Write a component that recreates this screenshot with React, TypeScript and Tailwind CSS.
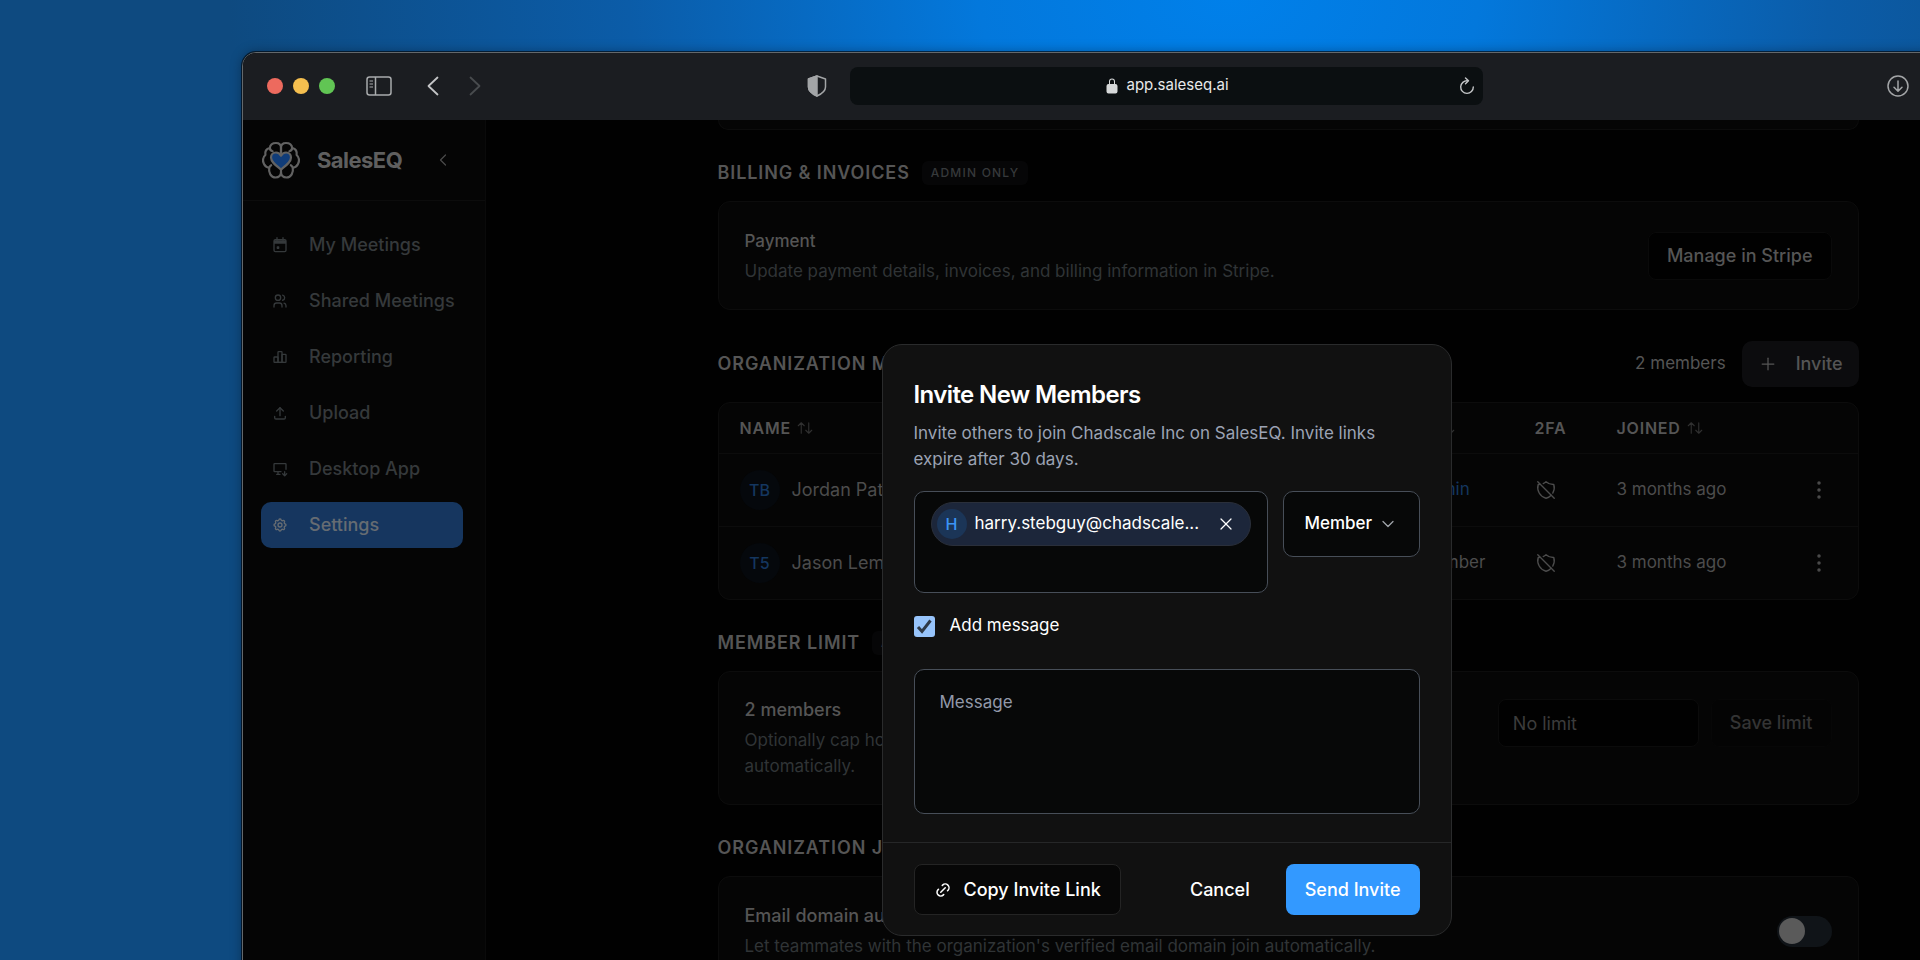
import * as React from "react";
import {
    TbArrowsSort,
    TbChartBar,
    TbChevronDown,
    TbChevronLeft,
    TbDeviceDesktopDown,
    TbDotsVertical,
    TbLink,
    TbPlus,
    TbSettings,
    TbShieldOff,
    TbUpload,
    TbUsers,
    TbX,
} from "react-icons/tb";
import { IoLockClosed } from "react-icons/io5";

function CalendarIcon({ className }: { className?: string }) {
    return (
        <svg viewBox="0 0 24 24" className={className} fill="none" stroke="currentColor" strokeWidth="2" strokeLinejoin="round" aria-hidden="true">
            <rect x="3" y="4" width="18" height="18" rx="2" />
            <path d="M3 5h18v5H3z" fill="currentColor" stroke="none" />
            <path d="M7.5 1v4M16.5 1v4" strokeLinecap="round" />
            <rect x="7" y="14" width="4" height="4" rx="1" fill="currentColor" stroke="none" />
        </svg>
    );
}

function Logo() {
    return (
        <svg viewBox="0 0 40 38" className="h-[38px] w-10 shrink-0" fill="none" stroke="#626262" strokeWidth="2.2" strokeLinecap="round" strokeLinejoin="round" aria-hidden="true">
            <path d="M20 12V6.5C20 3.5 17.8 2 15 2 11.5 2 9.2 4 8.8 7 5.5 7.8 3.8 10.5 4.4 14 1.8 16 1.3 20 3 23 4 25 6 26.4 8.2 26.8 7.4 31.5 9.8 36.5 14.5 36.5 18 36.5 20 34 20 31V27" />
            <path d="M20 12V6.5C20 3.5 22.2 2 25 2 28.5 2 30.8 4 31.2 7 34.5 7.8 36.2 10.5 35.6 14 38.2 16 38.7 20 37 23 36 25 34 26.4 31.8 26.8 32.6 31.5 30.2 36.5 25.5 36.5 22 36.5 20 34 20 31" />
            <path d="M8.8 7c.2 1.7 1.2 2.8 2.8 3.2M31.2 7c-.2 1.7-1.2 2.8-2.8 3.2M8.2 26.8c.3-1.2 1-2 2-2.6M31.8 26.8c-.3-1.2-1-2-2-2.6" />
            <path d="M20 28.500C15 24.500 10 21 10 16.500 10 13.500 12.300 11.500 15 11.500 17.200 11.500 19 12.700 20 14.700 21 12.700 22.800 11.500 25 11.500 27.700 11.500 30 13.500 30 16.500 30 21 25 24.500 20 28.500Z" fill="#103c78" />
        </svg>
    );
}

const navItems = [
    { label: "My Meetings", icon: CalendarIcon },
    { label: "Shared Meetings", icon: TbUsers },
    { label: "Reporting", icon: TbChartBar },
    { label: "Upload", icon: TbUpload },
    { label: "Desktop App", icon: TbDeviceDesktopDown },
    { label: "Settings", icon: TbSettings, active: true },
];

const members = [
    { initials: "TB", name: "Jordan Patel", role: "Admin", admin: true, joined: "3 months ago" },
    { initials: "T5", name: "Jason Lemon", role: "Member", admin: false, joined: "3 months ago" },
];

function BrowserBar() {
    return (
        <div className="relative flex h-[67px] items-center justify-between bg-[#1b1d21] pr-[181px] pb-[2px] pl-[24px]">
            <div className="flex items-center">
                <div className="flex gap-[10px]">
                    <span className="size-4 rounded-full bg-[#ed6a5e]" />
                    <span className="size-4 rounded-full bg-[#f5bf4f]" />
                    <span className="size-4 rounded-full bg-[#61c554]" />
                </div>
                <button type="button" aria-label="Toggle sidebar" className="ml-[31px] text-[#a9abad]">
                    <svg viewBox="0 0 26 20" className="h-5 w-[26px]" fill="none" stroke="currentColor" strokeWidth="1.500">
                        <rect x="1" y="1" width="24" height="18" rx="2.500" />
                        <path d="M9.500 1v18" />
                        <path d="M3.500 5h3.500M3.500 8h3.500M3.500 11h3.500" strokeWidth="1.200" />
                    </svg>
                </button>
                <button type="button" aria-label="Back" className="ml-[35px] text-[#c3c4c6]">
                    <svg viewBox="0 0 12 20" className="h-5 w-3" fill="none" stroke="currentColor" strokeWidth="1.800" strokeLinecap="round" strokeLinejoin="round">
                        <path d="M10.500 1.500 1.500 10l9 8.500" />
                    </svg>
                </button>
                <button type="button" aria-label="Forward" className="ml-[30px] text-[#484b4e]">
                    <svg viewBox="0 0 12 20" className="h-5 w-3" fill="none" stroke="currentColor" strokeWidth="1.800" strokeLinecap="round" strokeLinejoin="round">
                        <path d="M1.500 1.500 10.500 10l-9 8.500" />
                    </svg>
                </button>
            </div>

            {/* the address bar stays centred over the window whatever sits at the sides */}
            <div className="absolute inset-x-0 flex items-center justify-center">
                <div className="flex w-[633px] items-center">
                    <svg viewBox="0 0 20 22" className="-ml-[43px] mr-[23px] h-[22px] w-5 shrink-0 text-[#a3a5a7]" fill="none" stroke="currentColor" strokeWidth="1.500" strokeLinejoin="round">
                        <path d="M10 1 1.500 4v8c0 4 4 7 8.500 9 4.500-2 8.500-5 8.500-9V4Z" />
                        <path d="M10 1 1.500 4v8c0 4 4 7 8.500 9Z" fill="currentColor" />
                    </svg>
                    <div className="flex h-[38px] w-[633px] shrink-0 items-center rounded-lg bg-[#0b0f11] px-2">
                        <span className="w-4" />
                        <div className="flex flex-1 items-center justify-center gap-[6px] text-[15px] text-[#e8e9ea]">
                            <IoLockClosed className="size-4 text-[#d6d8d9]" />
                            <span>app.saleseq.ai</span>
                        </div>
                        <button type="button" aria-label="Reload" className="text-[#c3c5c7]">
                            <svg viewBox="0 0 16 18" className="h-[18px] w-4" fill="none" stroke="currentColor" strokeWidth="1.400" strokeLinecap="round" strokeLinejoin="round">
                                <path d="M8.500 3.800A6.300 6.300 0 1 0 14.300 10" />
                                <path d="M6.500 1l3 2.800-3 3" />
                            </svg>
                        </button>
                    </div>
                </div>
            </div>

            <button type="button" aria-label="Downloads" className="relative text-[#a3a5a7]">
                <svg viewBox="0 0 22 22" className="size-[22px]" fill="none" stroke="currentColor" strokeWidth="1.500" strokeLinecap="round" strokeLinejoin="round">
                    <circle cx="11" cy="11" r="10" />
                    <path d="M11 6v10M7 12.200l4 4 4-4" />
                </svg>
            </button>
        </div>
    );
}

function Sidebar() {
    return (
        <aside className="w-[243px] shrink-0 border-r border-[#0a0a0a] bg-[#050505]">
            <div className="flex h-[81px] items-center border-b border-[#0c0c0c] pl-[18px]">
                <Logo />
                <span className="ml-4 text-[22px] font-bold tracking-tight text-[#5f5f5f]">SalesEQ</span>
                <button type="button" aria-label="Collapse sidebar" className="ml-[31px] text-[#4a4a4a]">
                    <TbChevronLeft className="size-5" strokeWidth={1.5} />
                </button>
            </div>
            <nav className="flex flex-col gap-[10px] px-[18px] pt-[21px]">
                {navItems.map(({ label, icon: Icon, active }) => (
                    <a
                        key={label}
                        href="#"
                        className={
                            active
                                ? "flex h-[46px] w-[202px] items-center gap-[21px] rounded-[10px] bg-[#16365f] pl-[11px] text-lg font-medium text-[#666c72]"
                                : "flex h-[46px] w-[202px] items-center gap-[21px] rounded-[10px] pl-[11px] text-lg font-medium whitespace-nowrap text-[#35393b]"
                        }
                    >
                        <Icon className="size-4 shrink-0" />
                        {label}
                    </a>
                ))}
            </nav>
        </aside>
    );
}

function SectionHeading({ title, badge }: { title: string; badge?: string }) {
    return (
        <div className="flex h-6 items-center gap-3">
            <h2 className="text-lg font-semibold tracking-wider whitespace-nowrap text-[#555555]">{title}</h2>
            {badge && (
                <span className="flex h-6 items-center rounded-md bg-[#060607] px-[9px] text-xs font-medium tracking-widest text-[#36393b]">{badge}</span>
            )}
        </div>
    );
}

function SettingsPage() {
    return (
        <main className="min-w-0 flex-1 bg-[#010101]">
            <div className="mx-auto flex w-full max-w-[1141px] flex-col gap-[31px]">
                <div className="h-[10px] rounded-b-xl border border-t-0 border-[#0c0c0c] bg-[#050505]" />

                <section className="flex flex-col gap-4">
                    <SectionHeading title="BILLING & INVOICES" badge="ADMIN ONLY" />
                    <div className="flex h-[109px] items-center justify-between rounded-xl border border-[#0c0c0c] bg-[#050505] px-[26px]">
                        <div className="flex flex-col gap-1 text-[17px] leading-[26px]">
                            <h3 className="font-medium text-[#555555]">Payment</h3>
                            <p className="text-[#303436]">Update payment details, invoices, and billing information in Stripe.</p>
                        </div>
                        <button type="button" className="h-12 rounded-lg border border-[#0a0a0a] bg-[#010101] px-[18px] text-lg font-medium text-[#555555]">
                            Manage in Stripe
                        </button>
                    </div>
                </section>

                <section className="flex flex-col gap-[15px]">
                    <div className="flex items-center justify-between">
                        <SectionHeading title="ORGANIZATION MEMBERS" />
                        <div className="flex items-center gap-4 text-[#555555]">
                            <span className="text-[17px]">2 members</span>
                            <button type="button" className="flex h-[46px] items-center gap-[18px] rounded-[10px] bg-[#0c0c0e] px-4 text-lg font-medium">
                                <TbPlus className="size-5" strokeWidth={1.5} />
                                Invite
                            </button>
                        </div>
                    </div>
                    <div className="overflow-hidden rounded-xl border border-[#0c0c0c] bg-[#050505]">
                        <table className="w-full table-fixed text-left text-[17px] text-[#4c4c4c]">
                            <thead className="text-base tracking-wider text-[#555555]">
                                <tr className="h-[50px]">
                                    <th scope="col" className="pl-[21px] font-semibold">
                                        <span className="flex items-center gap-[5px]">
                                            NAME <TbArrowsSort className="size-[18px] text-[#303030]" strokeWidth={1.5} />
                                        </span>
                                    </th>
                                    <th scope="col" className="w-[146px] font-semibold">
                                        <span className="flex items-center gap-[5px]">
                                            ROLE <TbArrowsSort className="size-[18px] text-[#303030]" strokeWidth={1.5} />
                                        </span>
                                    </th>
                                    <th scope="col" className="w-[82px] font-semibold">2FA</th>
                                    <th scope="col" className="w-[168px] font-semibold">
                                        <span className="flex items-center gap-[5px]">
                                            JOINED <TbArrowsSort className="size-[18px] text-[#303030]" strokeWidth={1.5} />
                                        </span>
                                    </th>
                                    <th scope="col" className="w-[73px]" aria-label="Actions" />
                                </tr>
                            </thead>
                            <tbody>
                                {members.map((member) => (
                                    <tr key={member.initials} className="h-[73px] border-t border-[#0c0c0c]">
                                        <td className="pl-[21px] text-lg">
                                            <span className="flex items-center gap-3">
                                                <span className="flex size-10 items-center justify-center rounded-full bg-[#05080c] text-base font-medium text-[#14365f]">
                                                    {member.initials}
                                                </span>
                                                {member.name}
                                            </span>
                                        </td>
                                        <td className={member.admin ? "pl-[30px] text-[#14365f]" : "pl-[30px]"}>{member.role}</td>
                                        <td>
                                            <TbShieldOff className="size-[22px]" strokeWidth={1.5} />
                                        </td>
                                        <td>{member.joined}</td>
                                        <td>
                                            <button type="button" aria-label={`Actions for ${member.name}`} className="ml-[22px] block">
                                                <TbDotsVertical className="size-6" strokeWidth={1.5} />
                                            </button>
                                        </td>
                                    </tr>
                                ))}
                            </tbody>
                        </table>
                    </div>
                </section>

                <section className="flex flex-col gap-4">
                    <SectionHeading title="MEMBER LIMIT" badge="ADMIN ONLY" />
                    <div className="flex justify-between rounded-xl border border-[#0c0c0c] bg-[#050505] px-[26px] py-[25px]">
                        <div className="flex max-w-[540px] flex-col gap-1 text-[17px] leading-[26px]">
                            <h3 className="text-lg leading-[26px] font-medium text-[#555555]">2 members</h3>
                            <p className="text-[#303436]">Optionally cap how many people are able to join this organization automatically.</p>
                        </div>
                        <div className="flex gap-3 pt-[2px] text-lg">
                            <input
                                type="text"
                                aria-label="Member limit"
                                placeholder="No limit"
                                className="h-12 w-[201px] rounded-lg border border-[#0b0b0b] bg-[#010101] px-[14px] placeholder:text-[#3c3c3c]"
                            />
                            <button type="button" className="h-12 rounded-lg border border-[#070707] bg-[#040404] px-[18px] font-medium text-[#343434]">
                                Save limit
                            </button>
                        </div>
                    </div>
                </section>

                <section className="flex flex-col gap-4">
                    <SectionHeading title="ORGANIZATION JOINING" />
                    <div className="flex items-center justify-between rounded-xl border border-[#0c0c0c] bg-[#050505] px-[26px] py-[26px]">
                        <div className="flex flex-col gap-1 text-[17px] leading-[26px]">
                            <h3 id="auto-join" className="text-lg leading-[26px] font-medium text-[#555555]">Email domain auto-join</h3>
                            <p className="text-[#303436]">Let teammates with the organization's verified email domain join automatically.</p>
                        </div>
                        <input
                            type="checkbox"
                            role="switch"
                            aria-labelledby="auto-join"
                            className="flex h-[31px] w-[55px] appearance-none items-center rounded-full bg-[#101418] pl-[2px] before:size-[26px] before:rounded-full before:bg-[#5a5a5a]"
                        />
                    </div>
                </section>
            </div>
        </main>
    );
}

function InviteDialog() {
    const [role, setRole] = React.useState("Member");
    const [withMessage, setWithMessage] = React.useState(true);

    return (
        <div role="dialog" aria-labelledby="invite-title" className="w-[570px] rounded-[20px] border border-[#2a2b2c] bg-[#111111] text-[17px] text-white">
            <div className="px-[31px] pt-[33px] pb-7">
                <h2 id="invite-title" className="text-2xl leading-[34px] font-semibold tracking-tight">Invite New Members</h2>
                <p className="mt-2 leading-[26px] text-[#9ca3b4]">
                    Invite others to join Chadscale Inc on SalesEQ. Invite links expire after 30 days.
                </p>

                <div className="mt-[19px] flex items-start gap-[15px]">
                    <div className="h-[102px] min-w-0 flex-1 rounded-[10px] border border-[#474e58] bg-[#070808] px-4 pt-[10px]">
                        <div className="flex h-11 items-center rounded-full border border-[#2a2f3a] bg-[#1c263a] pr-[14px] pl-[5px]">
                            <span className="flex size-[30px] shrink-0 items-center justify-center rounded-full bg-[#1b3557] text-base font-medium text-[#3b94f5]">H</span>
                            <span className="ml-2 flex-1 whitespace-nowrap">harry.stebguy@chadscale...</span>
                            <button type="button" aria-label="Remove harry.stebguy@chadscale...">
                                <TbX className="size-5" strokeWidth={1.5} />
                            </button>
                        </div>
                        <input type="email" aria-label="Email addresses" className="h-9 w-full bg-transparent outline-none" />
                    </div>
                    <div className="grid w-[137px] items-center">
                        <select
                            aria-label="Role"
                            value={role}
                            onChange={(e) => setRole(e.target.value)}
                            className="h-[66px] appearance-none rounded-[10px] border border-[#474e58] bg-[#070808] pl-[21px] font-medium [grid-area:1/1]"
                        >
                            <option>Member</option>
                            <option>Admin</option>
                        </select>
                        <TbChevronDown className="pointer-events-none mr-[22px] size-5 justify-self-end text-[#a0a4aa] [grid-area:1/1]" strokeWidth={1.5} />
                    </div>
                </div>

                <label className="mt-[19px] flex h-7 items-center gap-[15px]">
                    <span className="grid size-[21px] place-items-center">
                        <input
                            type="checkbox"
                            checked={withMessage}
                            onChange={(e) => setWithMessage(e.target.checked)}
                            className="size-[21px] appearance-none rounded-[3px] bg-[#97c4fb] [grid-area:1/1]"
                        />
                        {withMessage && (
                            <svg viewBox="0 0 21 21" className="pointer-events-none size-[21px] [grid-area:1/1]" fill="none" stroke="#2f3a48" strokeWidth="3" aria-hidden="true">
                                <path d="M4 11l4 4.500L16.500 4.500" />
                            </svg>
                        )}
                    </span>
                    Add message
                </label>

                <textarea
                    aria-label="Message"
                    placeholder="Message"
                    className="mt-[29px] block h-[145px] w-full resize-none rounded-[10px] border border-[#474e58] bg-[#070808] px-[25px] py-5 placeholder:text-[#9299a9]"
                />
            </div>

            <div className="flex items-center border-t border-[#262728] px-[31px] pt-[21px] pb-5 text-lg">
                <button type="button" className="flex h-[51px] items-center gap-3 rounded-lg border border-[#242424] bg-[#070707] px-[19px] font-medium whitespace-nowrap">
                    <TbLink className="size-[18px]" />
                    Copy Invite Link
                </button>
                <button type="button" className="mr-4 ml-auto h-[51px] px-5 font-medium">Cancel</button>
                <button type="button" className="h-[51px] rounded-lg bg-[#3399ff] px-[19px] font-medium whitespace-nowrap">Send Invite</button>
            </div>
        </div>
    );
}

export default function App() {
    return (
        <div className="h-screen overflow-hidden bg-[radial-gradient(ellipse_1000px_620px_at_64%_0%,#0080ea_0%,#0378dc_25%,#0b5ca8_60%,#0e4a80_100%)] pt-[52px] font-[Inter,'Liberation_Sans',sans-serif]">
            <div className="-mr-[171px] ml-[242px] overflow-hidden rounded-t-[14px] border border-[#64686b] bg-[#010101] shadow-[0_0_0_1px_rgba(0,0,0,0.6),0_0_12px_rgba(0,0,0,0.35)]">
                <BrowserBar />
                <div className="relative flex min-h-screen">
                    <Sidebar />
                    <SettingsPage />
                    <div className="absolute inset-x-0 top-[224px] flex justify-center">
                        <InviteDialog />
                    </div>
                </div>
            </div>
        </div>
    );
}
